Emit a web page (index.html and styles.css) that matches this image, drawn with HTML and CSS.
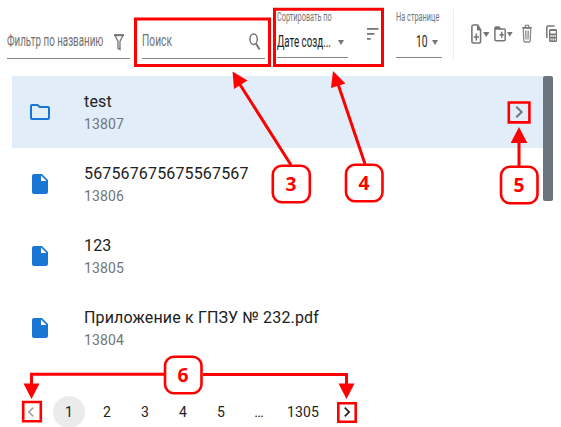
FILE: index.html
```html
<!DOCTYPE html>
<html lang="ru">
<head>
<meta charset="utf-8">
<title>Документы</title>
<link rel="stylesheet" href="styles.css">
</head>
<body>
<main class="page">
  <header class="toolbar">
    <div class="field field-wide">
      <span class="narrow tight">Фильтр по названию</span>
      <svg class="filter-icon" width="10" height="17" viewBox="0 0 10 17"><path d="M.9 1L4 7.500V14.500L6 15.500V7.500L9.100 1Z" fill="none" stroke="#757575" stroke-width="1.300"/><path d="M0 1.300H10" stroke="#757575" stroke-width="1.800"/></svg>
    </div>
    <div class="field field-wide search">
      <span class="narrow">Поиск</span>
      <svg class="search-icon" width="12" height="18" viewBox="0 0 12 18"><ellipse cx="4.600" cy="6.200" rx="3.700" ry="5.200" fill="none" stroke="#757575" stroke-width="1.500"/><path d="M7 10.500L10.500 16.500" stroke="#757575" stroke-width="2"/></svg>
    </div>
    <div class="select sort">
      <label class="caption">Сортировать по</label>
      <div class="value"><span class="narrow dark tight">Дате созд...</span><i class="caret"></i></div>
    </div>
    <svg class="sort-icon" width="12" height="12" viewBox="0 0 12 12" fill="#757575"><path d="M0 0H11.500V1.800H0ZM0 5H7.500V6.800H0ZM0 10H3.700V11.800H0Z"/></svg>
    <div class="select count">
      <label class="caption">На странице</label>
      <div class="value"><span class="narrow dark">10</span><i class="caret"></i></div>
    </div>
    <div class="actions">
      <svg class="new-file" width="20" height="20" viewBox="0 0 20 20"><path d="M2.200 1H6.600L9.600 5.800V17.300Q9.600 19 8.400 19H2.200Q.9 19 .9 17.300V2.700Q.9 1 2.200 1Z" fill="none" stroke="#757575" stroke-width="1.600"/><path d="M6 1V6.500H10L6.500 1ZM12 8H18.500L15.200 13Z" fill="#757575"/><path d="M5.300 9.500V16.500M2.700 13H8" stroke="#757575" stroke-width="1.500"/></svg>
      <svg class="new-folder" width="20" height="16" viewBox="0 0 20 16"><path d="M2 1H5L6.300 3H10.200Q11.200 3 11.200 4.500V13.200Q11.200 14.700 10.200 14.700H2Q.9 14.700 .9 13.200V2.500Q.9 1 2 1Z" fill="none" stroke="#757575" stroke-width="1.500"/><path d="M1 1H5.500L6.500 3.800H1ZM13 6H18.600L15.800 10.700Z" fill="#757575"/><path d="M7.700 5.800V11.800M5.600 8.800H9.800" stroke="#757575" stroke-width="1.500"/></svg>
      <svg class="trash" width="10" height="19" viewBox="0 0 10 19"><path d="M1.300 5L1.800 17Q1.900 18 2.800 18H7.200Q8.100 18 8.200 17L8.700 5M3.300 3V1.300H6.700V3" fill="none" stroke="#8b8b8b" stroke-width="1.300"/><path d="M.3 3.900H9.700" stroke="#757575" stroke-width="1.800"/><path d="M3.500 6.500L3.800 15.500M5 6.500V15.500M6.500 6.500L6.200 15.500" stroke="#8b8b8b" stroke-width=".9"/></svg>
      <svg class="calc" width="12" height="18" viewBox="0 0 12 18"><path d="M.8 13V3Q.8 1 2.200 1H8.500" fill="none" stroke="#757575" stroke-width="1.500"/><path d="M4.500 4H9.800Q11 4 11 5.500V15.500Q11 17 9.800 17H4.500Q3 17 3 15.500V5.500Q3 4 4.500 4Z" fill="#757575"/><path d="M4.400 6H9.700V8.500H4.400ZM4.400 10H5.600V12H4.400ZM6.500 10H7.700V12H6.500ZM8.600 10H9.800V12H8.600ZM4.400 13.500H5.600V15.500H4.400ZM6.500 13.500H7.700V15.500H6.500ZM8.600 13.500H9.800V15.500H8.600Z" fill="#fff"/></svg>
    </div>
  </header>

  <section class="browser">
    <ul class="list">
      <li class="row selected">
        <svg class="kind" width="24" height="24" viewBox="0 0 24 24" fill="#1976d2"><path d="M20 6h-8l-2-2H4c-1.100 0-1.990.9-1.990 2L2 18c0 1.100.9 2 2 2h16c1.100 0 2-.9 2-2V8c0-1.100-.9-2-2-2zm0 12H4V6h5.170l2 2H20v10z"/></svg>
        <div class="text"><div class="name">test</div><div class="id">13807</div></div>
        <svg class="open" width="24" height="24" viewBox="0 0 24 24" fill="#757575"><path d="M10 6L8.590 7.410 13.170 12l-4.580 4.590L10 18l6-6z"/></svg>
      </li>
      <li class="row">
        <svg class="kind" width="24" height="24" viewBox="0 0 24 24" fill="#1976d2"><path d="M6 2c-1.100 0-1.990.9-1.990 2L4 20c0 1.100.890 2 1.990 2H18c1.100 0 2-.9 2-2V8l-6-6H6zm7 7V3.500L18.500 9H13z"/></svg>
        <div class="text"><div class="name">567567675675567567</div><div class="id">13806</div></div>
      </li>
      <li class="row">
        <svg class="kind" width="24" height="24" viewBox="0 0 24 24" fill="#1976d2"><path d="M6 2c-1.100 0-1.990.9-1.990 2L4 20c0 1.100.890 2 1.990 2H18c1.100 0 2-.9 2-2V8l-6-6H6zm7 7V3.500L18.500 9H13z"/></svg>
        <div class="text"><div class="name">123</div><div class="id">13805</div></div>
      </li>
      <li class="row">
        <svg class="kind" width="24" height="24" viewBox="0 0 24 24" fill="#1976d2"><path d="M6 2c-1.100 0-1.990.9-1.990 2L4 20c0 1.100.890 2 1.990 2H18c1.100 0 2-.9 2-2V8l-6-6H6zm7 7V3.500L18.500 9H13z"/></svg>
        <div class="text"><div class="name">Приложение к ГПЗУ № 232.pdf</div><div class="id">13804</div></div>
      </li>
    </ul>
    <div class="scrollbar"></div>
  </section>

  <nav class="pager">
    <span class="item"><svg width="20" height="20" viewBox="0 0 24 24" fill="#a6a6a6"><path d="M15.410 7.410L14 6l-6 6 6 6 1.410-1.410L10.830 12z"/></svg></span>
    <span class="item current">1</span>
    <span class="item">2</span>
    <span class="item">3</span>
    <span class="item">4</span>
    <span class="item">5</span>
    <span class="item">…</span>
    <span class="item">1305</span>
    <span class="item"><svg width="20" height="20" viewBox="0 0 24 24" fill="#212121"><path d="M10 6L8.590 7.410 13.170 12l-4.580 4.590L10 18l6-6z"/></svg></span>
  </nav>

  <svg class="callouts" width="561" height="427" viewBox="0 0 561 427">
    <g fill="none" stroke="#f00">
      <g stroke-width="3">
        <path d="M135.500 18.900H269.500V65.500H135.500ZM274.500 9.200H382.500V65.500H274.500Z"/>
        <path d="M291 165L239 83M365 164L337 81M519 166V138M31.500 386V374.200H164M203 374.500H346.500V386"/>
      </g>
      <path stroke-width="2.600" d="M508.800 102.500H529.400V122.400H508.800ZM23.200 402H40.800V421.200H23.200ZM338.300 403.300H355.700V421.700H338.300Z"/>
      <g stroke-width="2.600" fill="#fff">
        <rect x="272.800" y="165.700" width="37" height="36.500" rx="9"/>
        <rect x="346" y="164.700" width="36.500" height="36.500" rx="9"/>
        <rect x="501" y="166.800" width="36.500" height="36.500" rx="9"/>
        <rect x="165" y="356.800" width="36.500" height="36.500" rx="9"/>
      </g>
    </g>
    <path fill="#f00" d="M232.500 71.500L247.500 80.500L234 89ZM333 71L345.500 83.500L331 88ZM519 127L527.300 143H510.700ZM31.500 399L23.500 383.500H39.500ZM346.500 399L338.500 383.500H354.500Z"/>
    <g class="digits">
      <text x="291" y="190.500" textLength="11" lengthAdjust="spacingAndGlyphs">3</text>
      <text x="364" y="190" textLength="11" lengthAdjust="spacingAndGlyphs">4</text>
      <text x="519" y="192" textLength="11" lengthAdjust="spacingAndGlyphs">5</text>
      <text x="183" y="381.500" textLength="11" lengthAdjust="spacingAndGlyphs">6</text>
    </g>
  </svg>
</main>
</body>
</html>
```
FILE: styles.css
```css
* { box-sizing: border-box; }

body {
  margin: 0;
  background: #fff;
  font-family: Roboto, "Liberation Sans", sans-serif;
  color: #212121;
}

.page {
  position: relative;
  width: 561px;
  height: 427px;
  overflow: hidden;
}

.toolbar {
  display: flex;
  align-items: flex-start;
  height: 76px;
  padding-left: 7px;
}

.field {
  display: flex;
  justify-content: space-between;
  height: 59px;
  padding-top: 31px;
  border-bottom: 1px solid #858585;
}

.field-wide { width: 123px; }

.search { margin-left: 12px; }

.narrow {
  display: inline-block;
  width: 0;
  white-space: nowrap;
  font-size: 16px;
  line-height: 20px;
  color: #707070;
  transform: scaleX(0.64);
  transform-origin: 0 50%;
}

.narrow.tight { transform: scaleX(0.612); }

.narrow.dark { color: #212121; }

.filter-icon { margin: 3px 6px 0 0; }

.search-icon { margin: 2px 4px 0 0; }

.select {
  height: 58px;
  padding-top: 10px;
  border-bottom: 1px solid #858585;
}

.sort { width: 71px; margin-left: 12px; }

.count { width: 46px; margin-left: 17px; }

.caption {
  display: block;
  width: 0;
  white-space: nowrap;
  font-size: 12px;
  line-height: 14px;
  color: #757575;
  transform: scaleX(0.612);
  transform-origin: 0 50%;
}

.value {
  display: flex;
  justify-content: space-between;
  padding: 8px 4px 0 0;
}

.count .value { padding-left: 20px; }

.caret {
  margin-top: 8px;
  width: 6px;
  height: 5px;
  background: #757575;
  clip-path: polygon(0 0, 100% 0, 50% 100%);
}

.sort-icon { margin: 28px 0 0 19px; }

.actions {
  display: flex;
  align-items: flex-start;
  height: 50px;
  margin: 9px 0 0 11px;
  padding-left: 17px;
  border-left: 1px solid #eee;
}

.actions svg { flex: none; }
.new-file { margin-top: 15px; }
.new-folder { margin: 17px 0 0 3px; }
.trash { margin: 15px 0 0 8px; }
.calc { margin: 16px 0 0 14px; }

.browser {
  display: flex;
  align-items: flex-start;
  padding-left: 12px;
}

.list {
  width: 531px;
  margin: 0;
  padding: 0;
  list-style: none;
}

.row {
  display: flex;
  align-items: center;
  height: 72px;
  padding: 0 12px 0 16px;
}

.selected { background: #e1edf8; }

.text { flex: 1; margin-left: 32px; }

.name {
  font-size: 16px;
  line-height: 24px;
  letter-spacing: 0.15px;
}

.id {
  font-size: 14px;
  line-height: 20px;
  letter-spacing: 0.15px;
  color: #757575;
}

.scrollbar {
  width: 10px;
  height: 125px;
  border-radius: 2px;
  background: #6c757d;
}

.pager {
  display: flex;
  gap: 6px;
  padding: 32px 0 0 15px;
}

.item {
  display: flex;
  align-items: center;
  justify-content: center;
  min-width: 32px;
  height: 32px;
  padding: 0 6px;
  border-radius: 16px;
  font-size: 14px;
  letter-spacing: 0.15px;
}

.current { background: #ebebeb; }

.callouts {
  position: absolute;
  top: 0;
  left: 0;
}

.digits {
  font: bold 20px "Open Sans", sans-serif;
  fill: #f00;
  text-anchor: middle;
}
```
